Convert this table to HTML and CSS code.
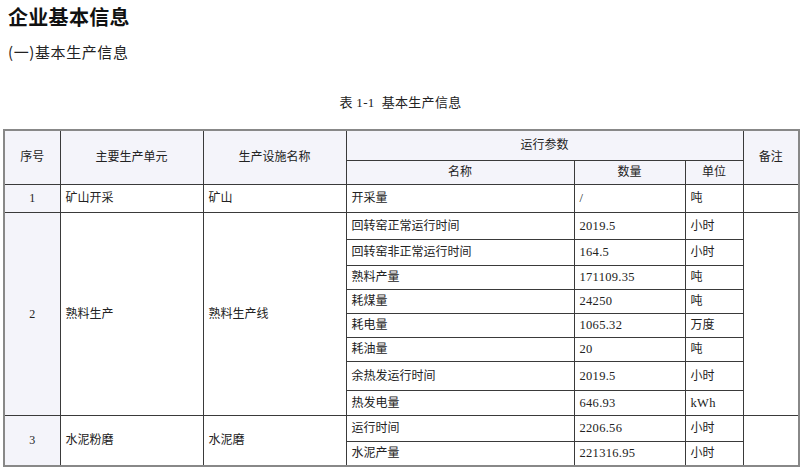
FILE: index.html
```html
<!DOCTYPE html>
<html lang="zh">
<head>
<meta charset="utf-8">
<title>企业基本信息</title>
<link rel="stylesheet" href="styles.css">
</head>
<body>
<div class="page">
  <h1 class="title">企业基本信息</h1>
  <h2 class="subtitle">(一)基本生产信息</h2>
  <p class="caption">表 1-1&nbsp; 基本生产信息</p>
  <table class="grid">
    <colgroup>
      <col class="c-no">
      <col class="c-unit">
      <col class="c-fac">
      <col class="c-name">
      <col class="c-qty">
      <col class="c-u">
      <col class="c-note">
    </colgroup>
    <thead>
      <tr class="h1">
        <th rowspan="2" class="no">序号</th>
        <th rowspan="2">主要生产单元</th>
        <th rowspan="2">生产设施名称</th>
        <th colspan="3">运行参数</th>
        <th rowspan="2">备注</th>
      </tr>
      <tr class="h2">
        <th>名称</th>
        <th>数量</th>
        <th>单位</th>
      </tr>
    </thead>
    <tbody>
      <tr class="r28">
        <td class="no">1</td>
        <td>矿山开采</td>
        <td>矿山</td>
        <td>开采量</td>
        <td class="num">/</td>
        <td>吨</td>
        <td></td>
      </tr>
      <tr class="r27">
        <td class="no" rowspan="8">2</td>
        <td rowspan="8">熟料生产</td>
        <td rowspan="8">熟料生产线</td>
        <td>回转窑正常运行时间</td>
        <td class="num">2019.5</td>
        <td>小时</td>
        <td rowspan="8"></td>
      </tr>
      <tr class="r26">
        <td>回转窑非正常运行时间</td>
        <td class="num">164.5</td>
        <td>小时</td>
      </tr>
      <tr class="r24">
        <td>熟料产量</td>
        <td class="num">171109.35</td>
        <td>吨</td>
      </tr>
      <tr class="r24">
        <td>耗煤量</td>
        <td class="num">24250</td>
        <td>吨</td>
      </tr>
      <tr class="r24">
        <td>耗电量</td>
        <td class="num">1065.32</td>
        <td>万度</td>
      </tr>
      <tr class="r24">
        <td>耗油量</td>
        <td class="num">20</td>
        <td>吨</td>
      </tr>
      <tr class="r29">
        <td>余热发运行时间</td>
        <td class="num">2019.5</td>
        <td>小时</td>
      </tr>
      <tr class="r25">
        <td>热发电量</td>
        <td class="num">646.93</td>
        <td class="num">kWh</td>
      </tr>
      <tr class="r26">
        <td class="no" rowspan="2">3</td>
        <td rowspan="2">水泥粉磨</td>
        <td rowspan="2">水泥磨</td>
        <td>运行时间</td>
        <td class="num">2206.56</td>
        <td>小时</td>
        <td rowspan="2"></td>
      </tr>
      <tr class="r25">
        <td>水泥产量</td>
        <td class="num">221316.95</td>
        <td>小时</td>
      </tr>
    </tbody>
  </table>
</div>
</body>
</html>
```

FILE: styles.css
```css
html, body {
  margin: 0;
  padding: 0;
  background: #ffffff;
}

body {
  color: #222222;
  font-family: "Liberation Serif", "Noto Sans CJK SC", serif;
}

.page {
  padding: 5px 2px 0 3px;
}

.title {
  margin: 0;
  padding-left: 5px;
  font-family: "Noto Sans CJK SC", sans-serif;
  font-size: 20px;
  font-weight: 700;
  line-height: 24px;
  letter-spacing: 0.3px;
  color: #111111;
}

.subtitle {
  margin: 13px 0 0;
  padding-left: 5px;
  font-family: "Noto Sans CJK SC", sans-serif;
  font-size: 15px;
  font-weight: 400;
  line-height: 20px;
  letter-spacing: 0.6px;
  color: #222222;
}

.caption {
  margin: 31px 0 0;
  text-align: center;
  font-family: "Liberation Serif", "Noto Sans CJK SC", serif;
  font-size: 13px;
  line-height: 20px;
  letter-spacing: 0.3px;
  color: #222222;
}

.grid {
  margin-top: 16px;
  width: 795px;
  table-layout: fixed;
  border-collapse: collapse;
  border: 2px solid #888888;
  font-family: "Liberation Serif", "Noto Sans CJK SC", serif;
  font-size: 12px;
  color: #222222;
}

.c-no { width: 56px; }
.c-unit { width: 143px; }
.c-fac { width: 143px; }
.c-name { width: 228px; }
.c-qty { width: 111px; }
.c-u { width: 58px; }
.c-note { width: 56px; }

.grid th,
.grid td {
  border: 1px solid #3a3a3a;
  padding: 0 5px;
  vertical-align: middle;
  line-height: 16px;
}

.grid th {
  background: #f4f4fa;
  font-weight: 400;
  text-align: center;
}

.grid td {
  background: #ffffff;
  text-align: left;
}

.grid td.no {
  background: #f4f4fa;
  text-align: center;
}

.grid td.num {
  font-size: 12.5px;
  letter-spacing: 0.3px;
}

.h1 { height: 30px; }
.h2 { height: 24px; }
.r24 { height: 24px; }
.r25 { height: 25px; }
.r26 { height: 26px; }
.r27 { height: 27px; }
.r28 { height: 28px; }
.r29 { height: 29px; }
```
